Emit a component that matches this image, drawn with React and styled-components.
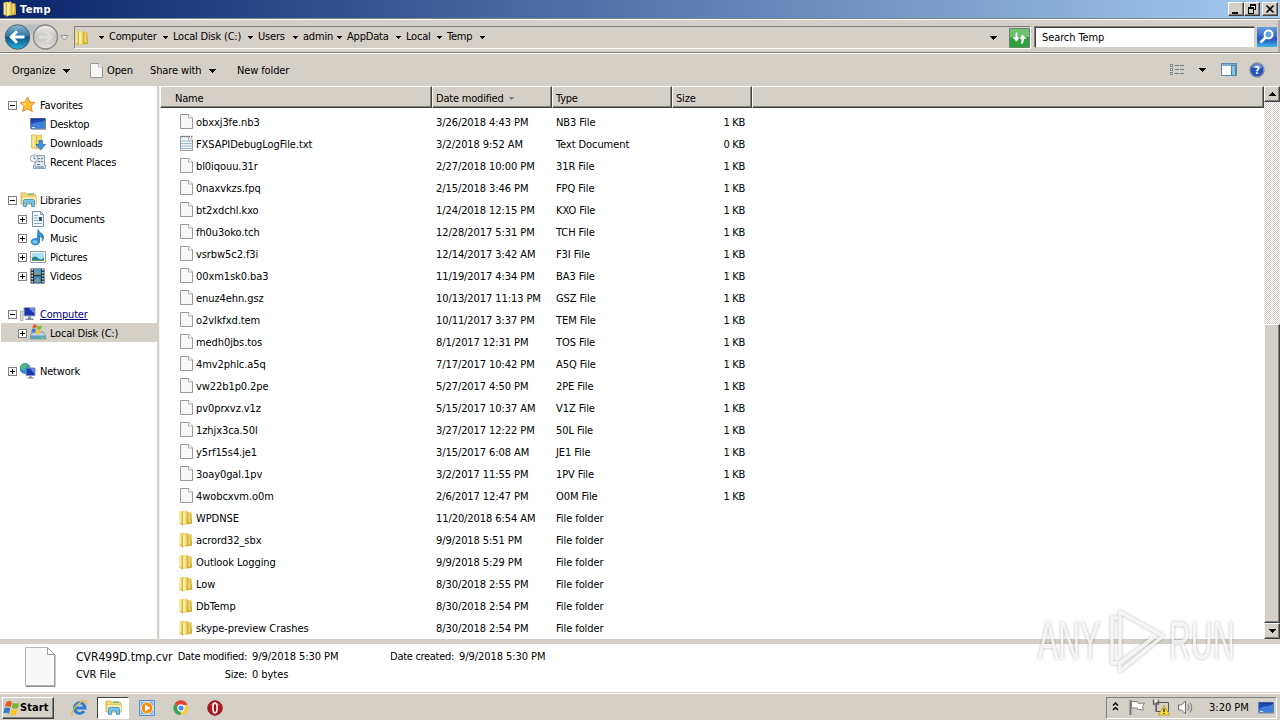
import React from "react";
import styled, { createGlobalStyle, css } from "styled-components";

const face = "#d4d0c8";
const shadow = "#808080";
const dark = "#404040";

const files = [
    ["obxxj3fe.nb3", "3/26/2018 4:43 PM", "NB3 File", "1 KB"],
    ["FXSAPIDebugLogFile.txt", "3/2/2018 9:52 AM", "Text Document", "0 KB", "text"],
    ["bl0iqouu.31r", "2/27/2018 10:00 PM", "31R File", "1 KB"],
    ["0naxvkzs.fpq", "2/15/2018 3:46 PM", "FPQ File", "1 KB"],
    ["bt2xdchl.kxo", "1/24/2018 12:15 PM", "KXO File", "1 KB"],
    ["fh0u3oko.tch", "12/28/2017 5:31 PM", "TCH File", "1 KB"],
    ["vsrbw5c2.f3i", "12/14/2017 3:42 AM", "F3I File", "1 KB"],
    ["00xm1sk0.ba3", "11/19/2017 4:34 PM", "BA3 File", "1 KB"],
    ["enuz4ehn.gsz", "10/13/2017 11:13 PM", "GSZ File", "1 KB"],
    ["o2vlkfxd.tem", "10/11/2017 3:37 PM", "TEM File", "1 KB"],
    ["medh0jbs.tos", "8/1/2017 12:31 PM", "TOS File", "1 KB"],
    ["4mv2phlc.a5q", "7/17/2017 10:42 PM", "A5Q File", "1 KB"],
    ["vw22b1p0.2pe", "5/27/2017 4:50 PM", "2PE File", "1 KB"],
    ["pv0prxvz.v1z", "5/15/2017 10:37 AM", "V1Z File", "1 KB"],
    ["1zhjx3ca.50l", "3/27/2017 12:22 PM", "50L File", "1 KB"],
    ["y5rf15s4.je1", "3/15/2017 6:08 AM", "JE1 File", "1 KB"],
    ["3oay0gal.1pv", "3/2/2017 11:55 PM", "1PV File", "1 KB"],
    ["4wobcxvm.o0m", "2/6/2017 12:47 PM", "O0M File", "1 KB"],
    ["WPDNSE", "11/20/2018 6:54 AM", "File folder", "", "folder"],
    ["acrord32_sbx", "9/9/2018 5:51 PM", "File folder", "", "folder"],
    ["Outlook Logging", "9/9/2018 5:29 PM", "File folder", "", "folder"],
    ["Low", "8/30/2018 2:55 PM", "File folder", "", "folder"],
    ["DbTemp", "8/30/2018 2:54 PM", "File folder", "", "folder"],
    ["skype-preview Crashes", "8/30/2018 2:54 PM", "File folder", "", "folder"],
];

const crumbs = [
    ["Computer", 64],
    ["Local Disk (C:)", 85],
    ["Users", 45],
    ["admin", 44],
    ["AppData", 59],
    ["Local", 41],
    ["Temp", 43],
];

const FolderIcon = () => (
    <svg width="16" height="16" viewBox="0 0 16 16">
        <path d="M.500 1.500L5 .800l.500 13.700-5-.5z" fill="#ecd468" />
        <path d="M7 2l5.500.500L13 13.500l-6 1.200z" fill="#dcba42" />
        <path d="M3.500 2L8 .300V13.500l-4.500 2.200z" fill="#f2df7e" />
        <path d="M1.500 2.500v10" stroke="#f8eda2" />
        <path d="M5 3v10.500" stroke="#fdf6bc" strokeWidth="1.300" />
        <path d="M3.500 2.500v12.500M8 1v12.500M12.500 9v4.500" stroke="#cba636" strokeWidth=".7" />
        <path d="M10.300 3v9.500" stroke="#f0da78" strokeWidth="1.300" />
        <path d="M1 13.800l2.500.7v1M8 13.600l4.500-.6" fill="none" stroke="#bf9a34" strokeWidth=".6" />
    </svg>
);

const FileIcon = ({ text }) => (
    <svg width="16" height="17" viewBox="0 0 16 17">
        <path d="M1 1h9l4 4v10.500H1z" fill={text ? "#eef5fa" : "#f7f7f7"} />
        <path d="M1.500 15.500V1.500h8.500l3.500 3.500v10.500z" fill="none" stroke="#9a9a9a" />
        <path d="M9.500 1.500V5h4" fill="#fff" stroke="#a4a4a4" strokeWidth=".8" />
        {text && <path d="M2 6h11M2 8.500h11M2 11h11M2 13.500h11" stroke="#9dbccd" />}
        {text && <path d="M2 1.500h12" stroke="#777" strokeDasharray="1.500 1" strokeWidth="1.500" />}
    </svg>
);

const MonitorIcon = () => (
    <svg width="18" height="16" viewBox="0 0 18 16">
        <path d="M.500 2.500h15v10H.500z" fill="#1d49b5" stroke="#6f7fa0" />
        <path d="M1 9c5-5 9-1 14-5v8H1z" fill="#4080dc" />
        <path d="M1 3h14" stroke="#122f8d" />
        <path d="M1 13.500h15" stroke="#9fb3cc" />
        <path d="M2 11.500h3" stroke="#c8ecff" />
    </svg>
);

const ExplorerIcon = ({ size = 17 }) => (
    <svg width={size} height={size} viewBox="0 0 17 17">
        <path d="M1 2h5l1 1.500h8.500V13H1z" fill="#f2d975" stroke="#caa94a" strokeWidth=".8" />
        <path d="M2 5.500h14.500V13H2z" fill="#fbeeaa" stroke="#d9bc5f" strokeWidth=".7" />
        <path d="M8 3h6" stroke="#61b36e" strokeWidth="1.200" />
        <path d="M3.500 15.500V10c0-1 .5-1.500 1.500-1.500h8c1 0 1.500.5 1.500 1.500v5.500h-3V12h-5v3.500z" fill="#76c3ee" stroke="#3a8ec4" strokeWidth=".8" />
    </svg>
);

const Flag = () => (
    <>
        <path d="M3 2.500q2.500-1.500 5 .2L6.700 7.400Q4.500 5.800 1.700 7z" fill="#ec5a24" />
        <path d="M8.800 3.200q2.700 1.500 5.700 0L13.200 8q-2.700 1.400-5.500 0z" fill="#76b82f" />
        <path d="M1.400 8q2.700-1.300 5 .3L5.200 13Q3 11.400.2 12.700z" fill="#3779cb" />
        <path d="M7.300 8.900q2.800 1.500 5.600.1L11.600 13.700q-3 1.400-5.500-.2z" fill="#f8c520" />
    </>
);

const treeIcons = {
    star: (
        <svg width="17" height="17" viewBox="0 0 17 17">
            <path d="M7.500 1l2.200 5 5.300.4-4 3.700 1.300 5.400-4.800-2.800-4.800 2.800L4 10.100 0 6.400 5.300 6z" fill="#ffc22b" stroke="#e8852a" />
            <path d="M7.500 3.500L6 7l-3.500.4L5 9.500z" fill="#fff1a5" />
        </svg>
    ),
    desktop: <MonitorIcon />,
    downloads: (
        <svg width="17" height="17" viewBox="0 0 17 17">
            <path d="M1.500 1h5v13h-5zM6.500 2l5-1v12l-5 2z" fill="#f3dc75" stroke="#d5b550" strokeWidth=".8" />
            <path d="M3.500 2v11" stroke="#fff6bd" />
            <path d="M9 6.500h3.500v4h3L10.700 16 6 10.500h3z" fill="#3c96dc" stroke="#1d67aa" strokeWidth=".7" />
        </svg>
    ),
    recent: (
        <svg width="17" height="16" viewBox="0 0 17 16">
            <path d="M5 1.500h9.500v9.500h1v3.500h-12v-3H5z" fill="#dce5ec" stroke="#8198ab" strokeWidth=".9" />
            <path d="M8 4.500h2M11 4.500h2M8 7.500h2M11 7.500h2M7 10.500h3M5 13h9" stroke="#5b7e9f" />
            <circle cx="4" cy="4.500" r="3.700" fill="#f4f6f7" stroke="#9aa8b3" />
            <path d="M4 2v2.700h2" fill="none" stroke="#62788a" strokeWidth=".8" />
        </svg>
    ),
    libraries: <ExplorerIcon />,
    documents: (
        <svg width="16" height="16" viewBox="0 0 16 16">
            <path d="M2.500.5h8l3 3v12h-11z" fill="#f3f8fc" stroke="#7e93a8" />
            <path d="M4 4.500h4M4 7h4M4 9.500h4M4 12.500h8" stroke="#87a9c9" />
            <path d="M9 6h3v4H9z" fill="#285591" />
            <path d="M10.500.5v3h3" fill="none" stroke="#7e93a8" />
        </svg>
    ),
    music: (
        <svg width="16" height="17" viewBox="0 0 16 17">
            <path d="M8 .500q1 3 4 4.500 2.800 2 .5 7 .5-4-3-5V13a4.200 3.200 0 1 1-2-3z" fill="#2f92d8" stroke="#1a66b1" strokeWidth=".7" />
            <ellipse cx="5" cy="13" rx="2.500" ry="1.800" fill="#7fc8f0" />
        </svg>
    ),
    pictures: (
        <svg width="16" height="14" viewBox="0 0 16 14">
            <path d="M.5 1.500h15v11H.5z" fill="#fff" stroke="#8e9aa5" />
            <path d="M2 3h12v8H2z" fill="#a8def7" />
            <path d="M2 8q3-3 6 0t6-.5V11H2z" fill="#2b7e8f" />
            <path d="M2 10h12v1H2z" fill="#4ea64e" />
        </svg>
    ),
    videos: (
        <svg width="15" height="16" viewBox="0 0 15 16">
            <path d="M.5.500h14v15H.5z" fill="#26333c" />
            <path d="M4 1h7v6H4z" fill="#4aa0d8" />
            <path d="M4 8h7v7H4z" fill="#3880bd" />
            <path d="M4 5l3-3 4 5H4zM4 13l4-4 3 5H4z" fill="#7a9a8e" />
            <path d="M2.200 1v14M12.800 1v14" stroke="#dce5ea" strokeWidth="1.500" strokeDasharray="1.500 1.500" />
        </svg>
    ),
    computer: (
        <svg width="17" height="16" viewBox="0 0 17 16">
            <path d="M.500 5H3v9.500H.500z" fill="#dfe5d8" stroke="#8a998f" strokeWidth=".7" />
            <path d="M4 1.500h11v8.500H4z" fill="#1b35af" stroke="#a0a9b9" />
            <path d="M9 2h5.500v6z" fill="#7189e0" />
            <path d="M8 10.500h3v2h2.500v1.500h-8v-1.500H8z" fill="#7f8da0" />
        </svg>
    ),
    disk: (
        <svg width="17" height="17" viewBox="0 0 17 17">
            <path d="M.500 11L3 8h10l2.500 3v4h-15z" fill="#bdd1dc" stroke="#6b8899" strokeWidth=".8" />
            <path d="M1 11.500h14V15H1z" fill="#5da2bd" />
            <path d="M11 14h3" stroke="#9be95c" />
            <g transform="translate(1 -1) scale(.75)"><Flag /></g>
        </svg>
    ),
    network: (
        <svg width="17" height="16" viewBox="0 0 17 16">
            <circle cx="5" cy="5.500" r="5" fill="#2d94d0" stroke="#1c6f9e" strokeWidth=".7" />
            <path d="M2 2q3-2 5 0L5 5 3 7 .5 5z" fill="#5dc06b" />
            <path d="M6 5h9v7.500H6z" fill="#173cb8" stroke="#8798b8" />
            <path d="M10 5.500h4.500v5z" fill="#6a8df0" />
            <path d="M9.500 13h2v1.500h2v1h-6v-1h2z" fill="#75849a" />
        </svg>
    ),
};

const tree = [
    ["Favorites", 0, "-", "star"],
    ["Desktop", 1, "", "desktop"],
    ["Downloads", 1, "", "downloads"],
    ["Recent Places", 1, "", "recent"],
    null,
    ["Libraries", 0, "-", "libraries"],
    ["Documents", 1, "+", "documents"],
    ["Music", 1, "+", "music"],
    ["Pictures", 1, "+", "pictures"],
    ["Videos", 1, "+", "videos"],
    null,
    ["Computer", 0, "-", "computer"],
    ["Local Disk (C:)", 1, "+", "disk"],
    null,
    ["Network", 0, "+", "network"],
];

const Arrow = ({ small, color = "#000", up }) => (
    <svg width={small ? 5 : 7} height={small ? 3 : 4} shapeRendering="crispEdges">
        {small
            ? <path d="M0 0h5v1H0zM1 1h3v1H1zM2 2h1v1H2z" fill={color} />
            : <path d={up ? "M3 0h1v1H3zM2 1h3v1H2zM1 2h5v1H1zM0 3h7v1H0z" : "M0 0h7v1H0zM1 1h5v1H1zM2 2h3v1H2zM3 3h1v1H3z"} fill={color} />}
    </svg>
);

const Expander = ({ sign }) => (
    <svg width="9" height="9" viewBox="0 0 9 9" shapeRendering="crispEdges">
        <path d="M.5.5h8v8h-8z" fill="#fff" stroke="#808080" />
        <path d={sign === "+" ? "M2 4.500h5M4.500 2v5" : "M2 4.500h5"} stroke="#000" />
    </svg>
);

export default function App() {
    return (
        <Screen>
            <Global />
            <TitleBar>
                <FolderIcon />
                <Title>Temp</Title>
                <Caption>
                    <svg width="14" height="12" shapeRendering="crispEdges"><path d="M3 9h6v2H3z" /></svg>
                </Caption>
                <Caption>
                    <svg width="14" height="12" shapeRendering="crispEdges">
                        <path d="M5 1h6v2H5zM5 3h1v1H5zM10 3h1v4H9V6h1zM3 4h6v2H3zM3 6h1v5H3zM8 6h1v5H8zM3 10h6v1H3z" />
                    </svg>
                </Caption>
                <Caption $gap>
                    <svg width="14" height="12"><path d="M3.500 2.500l7 7M10.500 2.500l-7 7" stroke="#000" strokeWidth="1.600" /></svg>
                </Caption>
            </TitleBar>
            <NavBar>
                <NavButtons>
                    <svg width="70" height="32" viewBox="0 0 70 32">
                        <defs>
                            <linearGradient id="back" x1="0" y1="0" x2="0" y2="1">
                                <stop offset="0" stopColor="#8fb6cc" />
                                <stop offset=".45" stopColor="#2f79a8" />
                                <stop offset=".52" stopColor="#0b5488" />
                                <stop offset="1" stopColor="#2bb4e2" />
                            </linearGradient>
                            <linearGradient id="fwd" x1="0" y1="0" x2="0" y2="1">
                                <stop offset="0" stopColor="#eeedea" />
                                <stop offset=".5" stopColor="#c6c4c0" />
                                <stop offset="1" stopColor="#e2e0dc" />
                            </linearGradient>
                        </defs>
                        <path d="M17 3.500h28v10H17z" fill="#b9bfc1" />
                        <circle cx="17.500" cy="16" r="12.300" fill="url(#back)" stroke="#4e626e" />
                        <path d="M24.500 16H12M17 10.200L11.200 16l5.800 5.800" fill="none" stroke="#fff" strokeWidth="3" />
                        <circle cx="45.500" cy="16" r="12" fill="url(#fwd)" stroke="#858585" strokeWidth="1.300" />
                        <path d="M38.500 16H50M46 10.500l5.500 5.500-5.500 5.500" fill="none" stroke="#dedcd8" strokeWidth="3" />
                        <path d="M61 14.500h7L64.500 19z" fill="#eee" stroke="#888" strokeWidth=".8" />
                    </svg>
                </NavButtons>
                <Address>
                    <FolderIcon />
                    <FirstArrow><Arrow small /></FirstArrow>
                    {crumbs.map(([name, width]) => (
                        <Crumb key={name} $width={width}>{name}<Arrow small /></Crumb>
                    ))}
                    <AddressDrop><Arrow /></AddressDrop>
                    <svg width="21" height="20" viewBox="0 0 21 20">
                        <path d="M.5.500h20v19H.5z" fill="#2fa03c" stroke="#6b8a6b" />
                        <path d="M1 1h19v8H1z" fill="#6cc46e" />
                        <path d="M9 3.500Q5.500 4 6 9H3l4.500 5 4-5H9q-.8-3 0-5.500zM11.500 16.500Q15.500 16 15 11h3l-4.500-5-4 5H12q.5 3-.5 5.500z" fill="#fff" stroke="#3b9b46" strokeWidth=".5" />
                    </svg>
                </Address>
                <Search>Search Temp</Search>
                <SearchButton>
                    <svg width="20" height="20" viewBox="0 0 20 20">
                        <circle cx="11.500" cy="7.500" r="4" fill="#5fa4e6" stroke="#fff" strokeWidth="2" />
                        <path d="M8.500 10.500L3.500 15.500" stroke="#fff" strokeWidth="2.500" />
                    </svg>
                </SearchButton>
            </NavBar>
            <Toolbar>
                <Tool $width={77}>Organize <Arrow /></Tool>
                <Tool $width={61} $icon><FileIcon />Open</Tool>
                <Tool $width={87}>Share with <Arrow /></Tool>
                <Tool>New folder</Tool>
                <ToolIcons>
                    <svg width="110" height="18" viewBox="0 0 110 18">
                        <g shapeRendering="crispEdges">
                            <path d="M10.500 3.500h2v2h-2zM10.500 7.500h2v2h-2zM10.500 11.500h2v2h-2z" fill="#fff" stroke="#7b8a99" />
                            <path d="M15 4.500h10M15 8.500h10M15 12.500h10" stroke="#6c7884" strokeDasharray="4 1" />
                            <path d="M39 7h7v1h-7zM40 8h5v1h-5zM41 9h3v1h-3zM42 10h1v1h-1z" />
                            <path d="M61.500 2.500h15v12h-15z" fill="#fff" stroke="#5c86ab" />
                            <path d="M62 3h14v2H62z" fill="#86acd0" />
                            <path d="M71.500 4.500h4v10h-4z" fill="#7cc4e6" stroke="#4c8ab5" />
                        </g>
                        <circle cx="97" cy="9" r="7" fill="#2551b8" stroke="#8290a8" strokeWidth="1.400" />
                        <path d="M92 7a5 4 0 0 1 10 0z" fill="#6f91dc" />
                        <text x="97" y="13" textAnchor="middle" fontFamily="DejaVu Sans" fontWeight="bold" fontSize="11" fill="#fff">?</text>
                    </svg>
                </ToolIcons>
            </Toolbar>
            <Main>
                <TreePane>
                    {tree.map((item, i) => item ? (
                        <TreeRow key={i} $depth={item[1]} $selected={item[3] === "disk"}>
                            <ExpandBox>{item[2] && <Expander sign={item[2]} />}</ExpandBox>
                            <TreeIcon>{treeIcons[item[3]]}</TreeIcon>
                            <TreeText $link={item[3] === "computer"}>{item[0]}</TreeText>
                        </TreeRow>
                    ) : <TreeRow key={i} />)}
                </TreePane>
                <Splitter />
                <ListPane>
                    <Header>
                        <HeadCell $width={272} $pad={14}>Name</HeadCell>
                        <HeadCell $width={120}>Date modified <Arrow small color="#808080" /></HeadCell>
                        <HeadCell $width={120}>Type</HeadCell>
                        <HeadCell $width={80}>Size</HeadCell>
                        <HeadCell $width={512} />
                    </Header>
                    <Rows>
                        {files.map(([name, date, type, size, kind]) => (
                            <Row key={name}>
                                <NameCell>
                                    <NameIcon>{kind === "folder" ? <FolderIcon /> : <FileIcon text={kind === "text"} />}</NameIcon>
                                    {name}
                                </NameCell>
                                <span>{date}</span>
                                <span>{type}</span>
                                <SizeCell>{size}</SizeCell>
                            </Row>
                        ))}
                    </Rows>
                </ListPane>
                <ScrollBar>
                    <ScrollButton><Arrow up /></ScrollButton>
                    <Track />
                    <Thumb />
                    <ScrollButton><Arrow /></ScrollButton>
                </ScrollBar>
            </Main>
            <Divider />
            <Details>
                <svg width="33" height="42" viewBox="0 0 33 42">
                    <path d="M1.500 1.500h22l7 7v31h-29z" fill="#f8f8f8" stroke="#b5b5b5" />
                    <path d="M31 9v31.500H1.500" fill="none" stroke="#8c8c8c" />
                    <path d="M23.500 1.500v7h7z" fill="#fff" stroke="#999" />
                </svg>
                <DetailGrid>
                    <BigName>CVR499D.tmp.cvr</BigName>
                    <DetailLabel>Date modified:</DetailLabel>
                    <span>9/9/2018 5:30 PM</span>
                    <DetailLabel>Date created:</DetailLabel>
                    <span>9/9/2018 5:30 PM</span>
                    <span>CVR File</span>
                    <DetailLabel>Size:</DetailLabel>
                    <span>0 bytes</span>
                </DetailGrid>
            </Details>
            <TaskBar>
                <Start>
                    <svg width="17" height="17" viewBox="0 0 15 15"><Flag /></svg>
                    Start
                </Start>
                <TaskItem>
                    <svg width="18" height="18" viewBox="0 0 18 18">
                        <path d="M14 12.200A5.300 5.300 0 1 1 15 9H6" fill="none" stroke="#2b7fd4" strokeWidth="3" />
                        <path d="M3 16.500C-2 14 11 0 16 2q1.500 1-.5 4" fill="none" stroke="#e6b93c" strokeWidth="1.300" />
                    </svg>
                </TaskItem>
                <TaskItem $pressed><ExplorerIcon /></TaskItem>
                <TaskItem>
                    <svg width="18" height="18" viewBox="0 0 18 18">
                        <path d="M1.500 1.500h15v15h-15z" fill="#b7daf5" stroke="#5791c4" />
                        <path d="M3 3h12v12H3z" fill="#78b3e2" />
                        <circle cx="9" cy="9" r="5.800" fill="#f58b16" stroke="#fbe5bd" />
                        <path d="M7 5.500v7l5.500-3.500z" fill="#fff" />
                    </svg>
                </TaskItem>
                <TaskItem>
                    <svg width="16" height="16" viewBox="0 0 16 16">
                        <path d="M8 8L1.500 4.300A7 7 0 0 1 14.500 5H8z" fill="#e24436" />
                        <path d="M8 8l6.500-3A7 7 0 0 1 7.500 15z" fill="#fbcb32" />
                        <path d="M8 8l-.5 7A7 7 0 0 1 1.500 4.300z" fill="#38a552" />
                        <circle cx="8" cy="8" r="3.200" fill="#4a87ec" stroke="#fff" strokeWidth="1.200" />
                    </svg>
                </TaskItem>
                <TaskItem>
                    <svg width="16" height="16" viewBox="0 0 16 16">
                        <circle cx="8" cy="8" r="7.200" fill="#b81420" stroke="#8c0c12" />
                        <path d="M3 5a6 5 0 0 1 10 0z" fill="#dc5960" />
                        <ellipse cx="8" cy="8" rx="2.100" ry="4.800" fill="#9e0e18" stroke="#fff" strokeWidth="1.700" />
                    </svg>
                </TaskItem>
                <Tray>
                    <svg width="90" height="20" viewBox="0 0 90 20">
                        <path d="M6 7.500L8.500 5 11 7.500M6 12l2.500-2.500L11 12" fill="none" stroke="#000" strokeWidth="1.500" />
                        <path d="M23.500 2v15" stroke="#777" strokeWidth="2" />
                        <path d="M24.500 3.500h6l1 2 6-.5-2 3.500 1 3.500-5.500-.5-.5-1.500h-6z" fill="#fff" stroke="#777" strokeWidth=".9" />
                        <path d="M49.500 4.500h12v9h-12z" fill="#d4d0c8" stroke="#555" />
                        <path d="M46.500 1.500V6h5V1.500M49 6v8" fill="none" stroke="#666" strokeWidth="1.300" />
                        <path d="M48 3h2" stroke="#fff" strokeWidth="2" />
                        <path d="M57 7.500l5.500 9.500h-11z" fill="#ffdd35" stroke="#b99414" strokeWidth=".8" />
                        <path d="M57 10.500V14M57 15v1" stroke="#000" strokeWidth="1.200" />
                        <path d="M71.500 7h3l4-4v13l-4-4h-3z" fill="#fff" stroke="#6f6f6f" />
                        <path d="M81 6.500q2 3 0 6M83 4.500q3.500 5 0 10" fill="none" stroke="#777" />
                    </svg>
                    <Clock>3:20 PM</Clock>
                    <MonitorIcon />
                </Tray>
            </TaskBar>
            <Watermark>
                <Letters>ANY</Letters>
                <svg width="66" height="80" viewBox="70 0 66 80">
                    <path d="M85 15h-6v45h7M87 54V9l43 24-43 35v-8l33-25" fill="none" stroke="#fff" strokeOpacity=".8" strokeWidth="3.500" strokeLinejoin="round" />
                </svg>
                <Letters>RUN</Letters>
            </Watermark>
        </Screen>
    );
}

const Global = createGlobalStyle`
body {
    margin: 0;
    overflow: hidden;
}
svg {
    display: block;
    flex: none;
}
`

const raised = css`
box-sizing: border-box;
background: ${face};
border: 1px solid;
border-color: #fff ${dark} ${dark} #fff;
box-shadow: inset -1px -1px 0 ${shadow};
`

const Screen = styled.div`
width: 1280px;
height: 720px;
display: flex;
flex-direction: column;
position: relative;
background: ${face};
color: #000;
font-family: "DejaVu Sans Condensed", "DejaVu Sans", sans-serif;
font-stretch: condensed;
font-size: 11px;
letter-spacing: -0.2px;
line-height: 14px;
white-space: nowrap;
overflow: hidden;
`
const TitleBar = styled.div`
height: 18px;
display: flex;
align-items: center;
box-sizing: border-box;
padding: 0 2px 0 3px;
background: linear-gradient(90deg, #0a246a, #a6caf0);
`
const Title = styled.div`
flex: 1;
padding: 1px 0 0 1px;
color: #fff;
font-weight: bold;
letter-spacing: 0.4px;
`
const Caption = styled.div`
${raised}
width: 16px;
height: 14px;
margin-left: ${p => p.$gap ? 2 : 0}px;
`
const NavBar = styled.div`
height: 36px;
box-sizing: border-box;
display: flex;
align-items: flex-start;
padding-top: 6px;
border-top: 1px solid ${shadow};
border-bottom: 1px solid #fff;
box-shadow: inset 0 1px 0 #fff, inset 0 -1px 0 ${shadow}, inset -2px 0 0 #aaa;
`
const NavButtons = styled.div`
width: 74px;
height: 30px;
margin-top: -4px;
`
const Address = styled.div`
width: 957px;
height: 23px;
box-sizing: border-box;
display: flex;
align-items: center;
margin-top: 1px;
border: 1px solid;
border-color: ${shadow} #fff #fff ${shadow};
`
const FirstArrow = styled.div`
width: 18px;
padding-left: 8px;
box-sizing: border-box;
`
const Crumb = styled.div`
width: ${p => p.$width}px;
box-sizing: border-box;
display: flex;
align-items: center;
justify-content: space-between;
padding-right: 5px;
padding-bottom: 1px;
`
const AddressDrop = styled.div`
margin-left: auto;
margin-right: 12px;
`
const Search = styled.div`
width: 220px;
height: 21px;
box-sizing: border-box;
margin: 2px 0 0 4px;
padding: 3px 6px;
background: #fff;
border: 1px solid;
border-color: ${dark} ${face} ${face} ${dark};
box-shadow: -1px -1px 0 ${shadow};
letter-spacing: -0.1px;
`
const SearchButton = styled.div`
width: 20px;
height: 20px;
margin: 2px 0 0 2px;
background: linear-gradient(#6e9fe0, #2454c4 60%, #3fb3e8);
`
const Toolbar = styled.div`
height: 32px;
display: flex;
align-items: center;
box-sizing: border-box;
padding: 1px 0 0 12px;
`
const Tool = styled.div`
width: ${p => p.$width ? p.$width + "px" : "auto"};
display: flex;
align-items: center;
gap: ${p => p.$icon ? 2 : 8}px;
letter-spacing: -0.12px;
`
const ToolIcons = styled.div`
margin: -2px 0 0 auto;
width: 120px;
`
const Main = styled.div`
height: 553px;
display: flex;
`
const TreePane = styled.div`
width: 157px;
padding-top: 9px;
box-sizing: border-box;
background: #fff;
`
const TreeRow = styled.div`
height: 19px;
margin-left: 1px;
padding-left: ${p => p.$depth ? 17 : 7}px;
box-sizing: border-box;
display: flex;
align-items: center;
background: ${p => p.$selected ? face : "transparent"};
`
const ExpandBox = styled.div`
width: 12px;
padding-top: 1px;
`
const TreeIcon = styled.div`
width: 20px;
`
const TreeText = styled.div`
padding-top: 2px;
${p => p.$link && "color: #00007f; text-decoration: underline;"}
`
const Splitter = styled.div`
width: 3px;
background: linear-gradient(90deg, ${face} 66%, #f4f3f0 66%);
`
const ListPane = styled.div`
width: 1104px;
background: #fff;
`
const Header = styled.div`
height: 22px;
display: flex;
`
const HeadCell = styled.div`
${raised}
width: ${p => p.$width}px;
padding: 3px 0 0 ${p => p.$pad || 3}px;
display: flex;
align-items: center;
gap: 5px;
`
const Rows = styled.div`
padding-top: 3px;
`
const Row = styled.div`
height: 22px;
display: grid;
grid-template-columns: 257px 120px 120px 69px;
align-items: center;
box-sizing: border-box;
padding: 1px 0 0 19px;
letter-spacing: -0.08px;
`
const NameCell = styled.div`
display: flex;
align-items: center;
gap: 1px;
`
const NameIcon = styled.div`
margin: -3px 0 -1px;
`
const SizeCell = styled.span`
text-align: right;
letter-spacing: -0.3px;
`
const ScrollBar = styled.div`
width: 16px;
display: flex;
flex-direction: column;
`
const ScrollButton = styled.div`
${raised}
height: 16px;
display: flex;
align-items: center;
justify-content: center;
`
const Track = styled.div`
height: 222px;
background: repeating-conic-gradient(#fff 0 25%, ${face} 0 50%) 0 0 / 2px 2px;
`
const Thumb = styled.div`
${raised}
flex: 1;
`
const Divider = styled.div`
height: 5px;
background: ${face};
`
const Details = styled.div`
height: 48px;
display: flex;
align-items: flex-start;
box-sizing: border-box;
padding: 2px 0 0 24px;
background: #fff;
`
const DetailGrid = styled.div`
display: grid;
grid-template-columns: 97px 69px 131px 66px 120px;
grid-auto-rows: 18px;
column-gap: 5px;
align-items: center;
padding: 2px 0 0 19px;
letter-spacing: -0.06px;
`
const BigName = styled.span`
font-size: 12px;
letter-spacing: 0;
`
const DetailLabel = styled.span`
display: flex;
justify-content: flex-end;
letter-spacing: -0.3px;
`
const TaskBar = styled.div`
height: 28px;
display: flex;
align-items: center;
box-sizing: border-box;
padding: 2px 3px 0 2px;
border-top: 1px solid ${face};
box-shadow: inset 0 1px 0 #fff;
`
const Start = styled.div`
${raised}
width: 52px;
height: 22px;
display: flex;
align-items: center;
margin-right: 9px;
font-weight: bold;
letter-spacing: 0.1px;
`
const TaskItem = styled.div`
width: 32px;
height: 22px;
margin-right: 2px;
box-sizing: border-box;
display: flex;
align-items: center;
justify-content: center;
border: 1px solid transparent;
${p => p.$pressed && `
background: #fff;
border-color: ${dark} #fff #fff ${dark};
`}
`
const Tray = styled.div`
width: 171px;
height: 22px;
margin-left: auto;
box-sizing: border-box;
display: flex;
align-items: center;
border: 1px solid;
border-color: ${shadow} #fff #fff ${shadow};
`
const Clock = styled.div`
width: 64px;
padding-left: 12px;
box-sizing: border-box;
letter-spacing: 0;
`
// floats over both the file list and the details pane
const Watermark = styled.div`
position: absolute;
left: 1038px;
top: 603px;
display: flex;
filter: drop-shadow(0 0 1.500px rgba(0, 0, 0, 0.35));
`
const Letters = styled.div`
width: 65px;
height: 80px;
color: rgba(255, 255, 255, 0.8);
font-family: "Liberation Sans", sans-serif;
font-stretch: normal;
font-size: 53px;
line-height: 76px;
letter-spacing: 0;
transform: scaleX(0.57);
transform-origin: 0 0;
`
